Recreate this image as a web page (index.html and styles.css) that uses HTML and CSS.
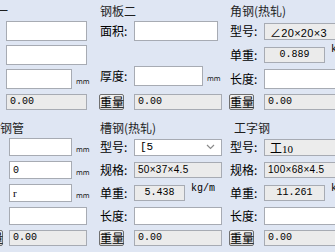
FILE: index.html
```html
<!DOCTYPE html>
<html lang="zh">
<head>
    <meta charset="UTF-8">
    <meta name="viewport" content="width=device-width, initial-scale=1.0">
    <title>钢材重量计算</title>
    <link rel="stylesheet" href="styles.css">
</head>
<body>
    <div class="panel">
        <!-- 钢板一 -->
        <div class="group top first">
            <div class="title">钢板一</div>
            <div class="row"><span class="lbl">长度:</span><input class="txt w81"></div>
            <div class="row"><span class="lbl">宽度:</span><input class="txt w81"></div>
            <div class="row"><span class="lbl">厚度:</span><input class="txt w66"><span class="unit">mm</span></div>
            <div class="row weigh"><button class="btn">重量</button><div class="ro w81">0.00</div></div>
        </div>

        <!-- 钢板二 -->
        <div class="group top">
            <div class="title">钢板二</div>
            <div class="row"><span class="lbl">面积:</span><input class="txt w84"></div>
            <div class="row far"><span class="lbl">厚度:</span><input class="txt w69"><span class="unit">mm</span></div>
            <div class="row weigh"><button class="btn">重量</button><div class="ro w88">0.00</div></div>
        </div>

        <!-- 角钢 -->
        <div class="group top">
            <div class="title">角钢(热轧)</div>
            <div class="row"><span class="lbl">型号:</span><div class="combo w90"><span class="spec">∠20×20×3</span></div></div>
            <div class="row"><span class="lbl">单重:</span><div class="ro w61 center">0.889</div><span class="kg">kg/m</span></div>
            <div class="row"><span class="lbl">长度:</span><input class="txt w90"></div>
            <div class="row weigh"><button class="btn">重量</button><div class="ro w90">0.00</div></div>
        </div>

        <!-- 钢管 -->
        <div class="group bottom first pipe">
            <div class="title">钢管</div>
            <div class="row"><span class="lbl">外径:</span><input class="txt w63"><span class="unit">mm</span></div>
            <div class="row"><span class="lbl">壁厚:</span><input class="txt w63" value="0"><span class="unit">mm</span></div>
            <div class="row"><span class="lbl">内径:</span><input class="txt w63 serif" value="r"><span class="unit">mm</span></div>
            <div class="row"><span class="lbl">长度:</span><input class="txt w78"></div>
            <div class="row weigh"><button class="btn">重量</button><div class="ro w78">0.00</div></div>
        </div>

        <!-- 槽钢 -->
        <div class="group bottom">
            <div class="title">槽钢(热轧)</div>
            <div class="row"><span class="lbl">型号:</span>
                <div class="select w88"><span class="mono">[5</span>
                    <svg class="arrow" width="9" height="6" viewBox="0 0 9 6"><path d="M1 1 L4.5 4.5 L8 1" fill="none" stroke="#8a8a8a" stroke-width="1.2"/></svg>
                </div>
            </div>
            <div class="row"><span class="lbl">规格:</span><div class="ro w88"><span class="spec">50×37×4.5</span></div></div>
            <div class="row"><span class="lbl">单重:</span><div class="ro w51 center">5.438</div><span class="kg">kg/m</span></div>
            <div class="row"><span class="lbl">长度:</span><input class="txt w88"></div>
            <div class="row weigh"><button class="btn">重量</button><div class="ro w88">0.00</div></div>
        </div>

        <!-- 工字钢 -->
        <div class="group bottom">
            <div class="title indent">工字钢</div>
            <div class="row"><span class="lbl">型号:</span><div class="combo w90">工<span class="serif">10</span></div></div>
            <div class="row"><span class="lbl">规格:</span><div class="ro w90"><span class="spec">100×68×4.5</span></div></div>
            <div class="row"><span class="lbl">单重:</span><div class="ro w61 center">11.261</div><span class="kg">kg/m</span></div>
            <div class="row"><span class="lbl">长度:</span><input class="txt w90"></div>
            <div class="row weigh"><button class="btn">重量</button><div class="ro w90">0.00</div></div>
        </div>
    </div>
</body>
</html>
```

FILE: styles.css
```css
:root {
    --bg: #dfe6f3;
    --border: #a7abb3;
    --readonly: #ebebeb;
}
body {
    margin: 0;
    width: 335px;
    height: 252px;
    overflow: hidden;
    background: var(--bg);
    font-family: "Noto Sans CJK SC", sans-serif;
    font-size: 12px;
    color: #000;
}
.panel {
    display: grid;
    grid-template-columns: 128px 130px 130px;
    grid-template-rows: 118px 128px;
    margin-left: -28px;
    width: 388px;
}
.group {
    --lw: 34px;
    display: flex;
    flex-direction: column;
}
.group.top {
    height: 110px;
    gap: 4px;
}
.group.bottom {
    height: 128px;
    gap: 5px;
}
.first {
    --lw: 34px;
}
.pipe {
    --lw: 37px;
}
.title {
    color: #1e1e1e;
    white-space: nowrap;
}
.top .title {
    height: 17px;
    line-height: 21px;
}
.bottom .title {
    height: 15px;
    line-height: 20px;
}
.pipe .title {
    padding-left: 28px;
}
.title.indent {
    padding-left: 4px;
}
.row {
    display: flex;
    align-items: center;
    white-space: nowrap;
}
.top .row {
    height: 20px;
}
.bottom .row {
    height: 18px;
}
.row.far {
    margin-top: 21px;
}
.row.weigh {
    margin-top: auto;
    height: 16px;
}
.lbl {
    width: var(--lw);
    flex: none;
    line-height: 1;
}
.txt, .ro, .combo, .select {
    box-sizing: border-box;
    flex: none;
    border: 1px solid var(--border);
    background: #fff;
    margin: 0;
    padding: 0 3px;
    font-family: "Liberation Mono", "Noto Sans CJK SC", monospace;
    font-size: 10px;
    color: #000;
}
.txt {
    height: 20px;
    outline: none;
}
.bottom .txt {
    height: 18px;
}
.ro {
    height: 16px;
    line-height: 14px;
    background: var(--readonly);
}
.ro.center {
    text-align: center;
}
.combo {
    height: 17px;
    line-height: 15px;
    padding-left: 5px;
    background: #ececec;
    font-family: "Noto Sans CJK SC", sans-serif;
    font-size: 12px;
}
.select {
    height: 17px;
    display: flex;
    align-items: center;
    justify-content: space-between;
    padding: 0 6px 0 5px;
}
.mono {
    font-family: "Liberation Mono", monospace;
    font-size: 11px;
}
.spec {
    font-family: "Liberation Sans", "Noto Sans CJK SC", sans-serif;
    font-size: 10px;
    letter-spacing: 0.3px;
}
.combo .spec {
    font-size: 11px;
}
.serif {
    font-family: "Liberation Serif", serif;
    font-size: 11px;
}
.w51 { width: 51px; }
.w61 { width: 61px; }
.w63 { width: 63px; }
.w66 { width: 66px; }
.w69 { width: 69px; }
.w78 { width: 78px; }
.w81 { width: 81px; }
.w84 { width: 84px; }
.w88 { width: 88px; }
.w90 { width: 90px; }
.unit {
    font-family: "DejaVu Sans", sans-serif;
    font-size: 7px;
    margin-left: 4px;
    padding-top: 5px;
    color: #111;
}
.kg {
    font-family: "Liberation Mono", monospace;
    font-size: 10px;
    margin-left: 6px;
    align-self: flex-start;
    line-height: 10px;
}
.btn {
    box-sizing: border-box;
    width: 25px;
    height: 16px;
    margin: 0 10px 0 calc(var(--lw) - 35px);
    padding: 0;
    border: 1px solid #6f6f6f;
    border-radius: 2px;
    background: linear-gradient(#f4f4f4, #dcdcdc);
    font-family: "Noto Sans CJK SC", sans-serif;
    font-size: 12px;
    line-height: 14px;
    color: #000;
}
.pipe .btn {
    margin-right: 6px;
    margin-left: calc(var(--lw) - 31px);
}
```
